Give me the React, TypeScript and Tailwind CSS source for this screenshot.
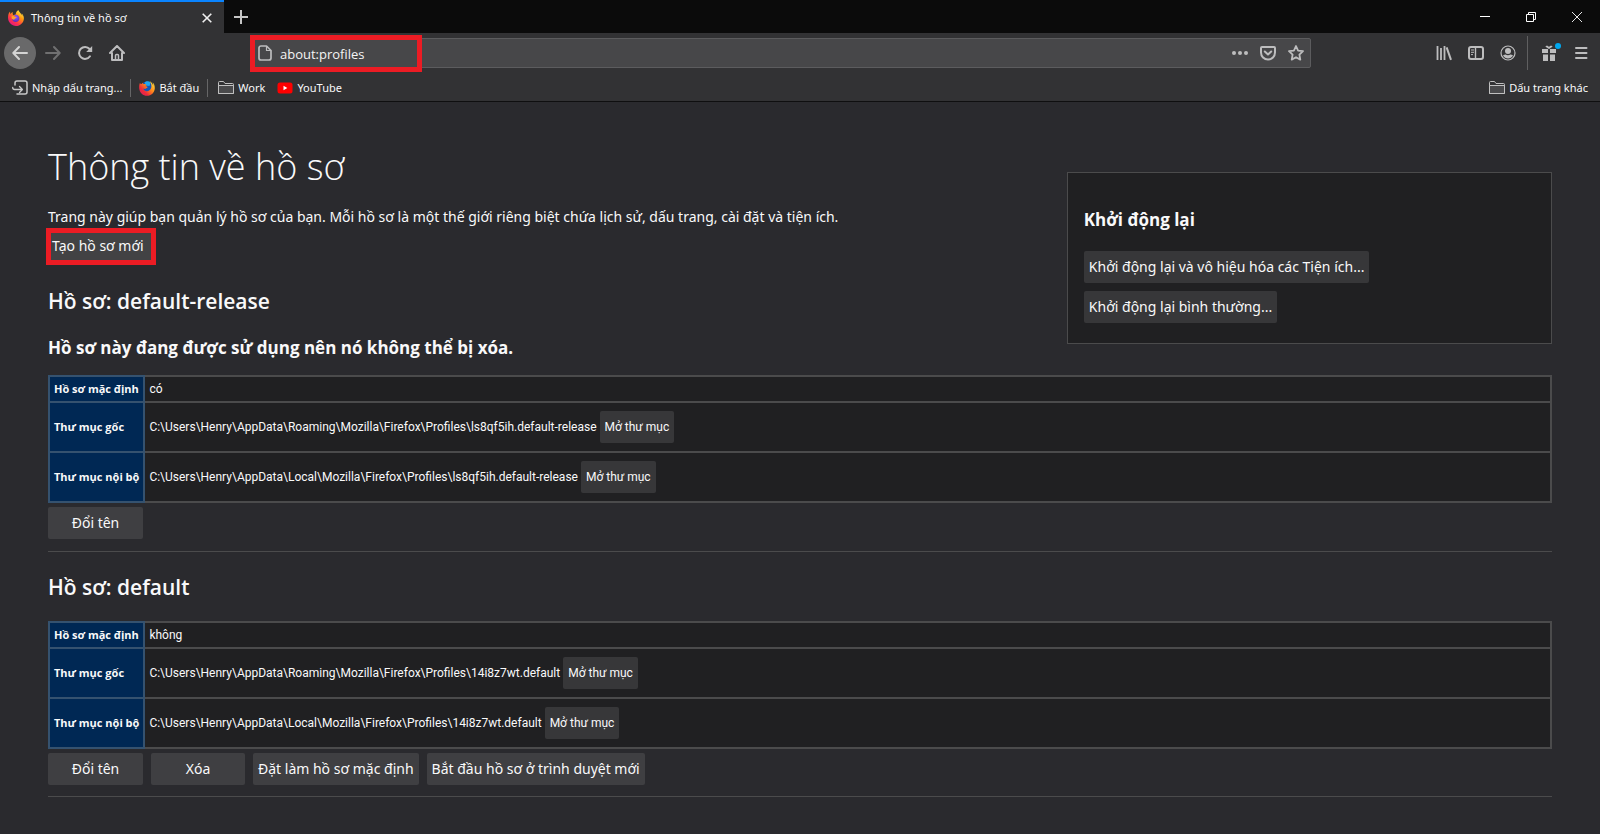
import React from "react";

const pageFont = "font-['Open_Sans','Noto_Sans',sans-serif]";
const smallFont = "font-['Noto_Sans','Open_Sans',sans-serif]";

function FirefoxLogo({ className }: { className?: string }) {
  return (
    <svg viewBox="0 0 16 16" className={className} aria-hidden="true">
      <defs>
        <linearGradient id="fxFlame" x1="0.85" y1="0.05" x2="0.2" y2="0.95">
          <stop offset="0" stopColor="#fff44f" />
          <stop offset="0.35" stopColor="#ff980e" />
          <stop offset="0.7" stopColor="#ff3647" />
          <stop offset="1" stopColor="#e31587" />
        </linearGradient>
        <radialGradient id="fxGlobe" cx="0.5" cy="0.3" r="0.7">
          <stop offset="0" stopColor="#9059ff" />
          <stop offset="1" stopColor="#5b2bb5" />
        </radialGradient>
      </defs>
      <path
        d="M15.2 5.6c-.35-.85-1.05-1.75-1.6-2.05.45.87.7 1.75.8 2.4C13.5 3.7 12 2.8 10.8.9 10.6.6 10.5.4 10.4.1 8.5 1.2 7.8 3.2 7.7 4.4c-.9.05-1.7.3-2.4.75-.1-.1-.3-.4-.35-.6-.4-.7-.3-1.8-.1-2.5C3.8 2.5 3 3.3 2.5 3.9c-.4-.5-.4-2.1-.35-2.45C1.3 2 .2 3.7.1 6.5-.5 12 3.5 16 8 16c4.2 0 7.8-3.2 7.9-7.8 0-.9-.3-1.8-.7-2.6z"
        fill="url(#fxFlame)"
      />
      <path d="M6.5 5.2c2.200-1 4.700.3 4.900 3 .1 2.300-1.600 3.900-3.700 3.900-2.200 0-3.600-1.700-3.500-3.400.5-.8 1.800-.6 2.300-1z" fill="url(#fxGlobe)" />
      <path d="M3.6 6.3c1.300-.7 2.600-.4 3.300.5.600.1 1.400.2 1.700.4 0 .5-.6 1-1.700 1.300.1 1.100-1.200 1.500-2.300.8-.2 0-.8-.4-1-1z" fill="#ffa12b" />
    </svg>
  );
}

function FirefoxOldLogo({ className }: { className?: string }) {
  return (
    <svg viewBox="0 0 16 16" className={className} aria-hidden="true">
      <defs>
        <linearGradient id="fxOld" x1="0.95" y1="0.1" x2="0.1" y2="0.9">
          <stop offset="0" stopColor="#ffe03d" />
          <stop offset="0.4" stopColor="#ff8b1a" />
          <stop offset="0.75" stopColor="#ee2b3a" />
          <stop offset="1" stopColor="#e01f5a" />
        </linearGradient>
      </defs>
      <circle cx="8" cy="7" r="5.5" fill="#1456b8" />
      <path d="M5.5 2.6C7 1 10 .8 11.6 2.4L10.5 6 7 5.4z" fill="#1fa6f0" />
      <path
        d="M.9 3C.3 4.6 0 6.5.2 8.4.7 12.7 4 15.8 8 15.8c4.300 0 7.600-3.300 7.800-7.600.1-2.300-.8-4.600-2.200-5.900.5 1.200.7 2.400.6 3.500-.5-1.900-1.700-3.700-3.600-4.700 1.600 2.500 2.200 4.700 1.600 6.700-.7 2.300-2.600 3.600-4.700 3.400-1.900-.2-3-1.500-3.100-2.700 1 .7 2.300.6 2.900-.2.400-.5 1.100-.6 1.300-1-.2-.7-1.200-.9-2.200-1 .2-.5.900-.9 1.300-1.200-.6-.7-2.100-1.300-3.400-1C4 4.300 4 3.400 4.400 2.500 3.500 2.900 3 3.400 2.500 4.100 1.700 4 1.200 3.600.9 3z"
        fill="url(#fxOld)"
      />
    </svg>
  );
}

function FolderIcon() {
  return (
    <svg viewBox="0 0 16 16" className="size-4 shrink-0" fill="none" stroke="#c0c0c0" aria-hidden="true">
      <path d="M.5 13.5v-11a1 1 0 0 1 1-1h4l1.500 2h7.500a1 1 0 0 1 1 1v9z" />
      <path d="M.5 5.5h15v8H.5z" fill="#4a4a4c" />
    </svg>
  );
}

function ToolButton({ label, children, className = "" }: { label: string; children: React.ReactNode; className?: string }) {
  return (
    <button type="button" aria-label={label} className={`flex size-8 shrink-0 items-center justify-center text-[#bdbdbe] ${className}`}>
      {children}
    </button>
  );
}

function TitleBar() {
  return (
    <div className="flex h-[33px] items-stretch bg-[#0b0b0b]">
      <div className="flex w-56 items-center border-t-2 border-[#0a84ff] bg-[#323234] px-2">
        <FirefoxLogo className="size-4 shrink-0" />
        <span className={`flex-1 pl-[7px] text-[11px] leading-4 whitespace-nowrap ${smallFont}`}>Thông tin về hồ sơ</span>
        <button type="button" aria-label="Đóng thẻ" className="flex h-5 w-[18px] items-center justify-center">
          <svg viewBox="0 0 10 10" className="size-[10px]" stroke="#f0f0f0" strokeWidth="1.6" aria-hidden="true">
            <path d="M.7.7l8.600 8.600M9.300.7L.7 9.300" />
          </svg>
        </button>
      </div>
      <button type="button" aria-label="Mở thẻ mới" className="flex w-[34px] items-center justify-center">
        <svg viewBox="0 0 14 14" className="size-[14px]" stroke="#c6c6c6" strokeWidth="2" aria-hidden="true">
          <path d="M7 0v14M0 7h14" />
        </svg>
      </button>
      <div className="flex-1" />
      <div className="flex">
        <button type="button" aria-label="Thu nhỏ" className="flex w-[46px] items-center justify-center">
          <svg viewBox="0 0 10 10" className="size-[10px]" stroke="#fff" aria-hidden="true">
            <path d="M0 4.500h10" />
          </svg>
        </button>
        <button type="button" aria-label="Khôi phục" className="flex w-[46px] items-center justify-center">
          <svg viewBox="0 0 10 10" className="size-[10px]" stroke="#fff" fill="none" aria-hidden="true">
            <path d="M.5 2.500h7v7h-7zM2.500 2.500v-2h7v7h-2" />
          </svg>
        </button>
        <button type="button" aria-label="Đóng" className="flex w-[46px] items-center justify-center">
          <svg viewBox="0 0 10 10" className="size-[10px]" stroke="#fff" strokeWidth="0.9" aria-hidden="true">
            <path d="M0 0l10 10M10 0L0 10" />
          </svg>
        </button>
      </div>
    </div>
  );
}

function NavBar() {
  return (
    <div className="flex h-10 items-center bg-[#323234] pr-[3px] pl-1">
      <ToolButton label="Quay lại" className="mr-px rounded-full bg-[#69696a]">
        <svg viewBox="0 0 16 16" className="size-4" fill="none" stroke="#d4d4d4" strokeWidth="2" strokeLinecap="round" strokeLinejoin="round" aria-hidden="true">
          <path d="M15 8H1.500M7 2L1.300 8 7 14" />
        </svg>
      </ToolButton>
      <ToolButton label="Tiến tới">
        <svg viewBox="0 0 16 16" className="size-4" fill="none" stroke="#707071" strokeWidth="2" strokeLinecap="round" strokeLinejoin="round" aria-hidden="true">
          <path d="M1 8h13.500M9 2l5.700 6L9 14" />
        </svg>
      </ToolButton>
      <ToolButton label="Tải lại">
        <svg viewBox="0 0 16 16" className="size-4" fill="none" stroke="currentColor" strokeWidth="2" strokeLinecap="round" aria-hidden="true">
          <path d="M13 11.300A6 6 0 1 1 12.600 4" />
          <path d="M15.200 1v6h-6z" fill="currentColor" stroke="none" />
        </svg>
      </ToolButton>
      <ToolButton label="Trang chủ">
        <svg viewBox="0 0 16 16" className="size-4" fill="none" stroke="currentColor" strokeWidth="2" strokeLinecap="round" strokeLinejoin="round" aria-hidden="true">
          <path d="M1 8l7-7 7 7M3 8v7h10V8" />
          <path d="M6.500 15v-4.500a1 1 0 0 1 1-1h1a1 1 0 0 1 1 1V15" strokeWidth="1.500" />
        </svg>
      </ToolButton>
      <div className="flex flex-1 justify-center pr-[117px] pl-[118px]">
        <div className="relative flex h-[30px] w-full items-center rounded-xs border border-[#5c5c5e] bg-[#474749] pl-1.5">
          <svg viewBox="0 0 14 16" className="h-4 w-[14px] shrink-0" fill="none" stroke="#bdbdbe" strokeWidth="1.700" strokeLinejoin="round" aria-hidden="true">
            <path d="M1 3a2 2 0 0 1 2-2h5.500L13 5.500V13a2 2 0 0 1-2 2H3a2 2 0 0 1-2-2z" />
            <path d="M8.500 1v4.500H13" strokeWidth="1.200" />
          </svg>
          <input
            aria-label="Địa chỉ"
            defaultValue="about:profiles"
            className="ml-2 min-w-0 flex-1 bg-transparent pt-0.5 text-[13px] leading-5 text-[#f4f4f4] outline-none"
          />
          <button type="button" aria-label="Thao tác trang" className="flex w-7 justify-center">
            <svg viewBox="0 0 16 16" className="size-4" fill="#bdbdbe" aria-hidden="true">
              <circle cx="2" cy="8" r="2" />
              <circle cx="8" cy="8" r="2" />
              <circle cx="14" cy="8" r="2" />
            </svg>
          </button>
          <button type="button" aria-label="Lưu vào Pocket" className="flex w-7 justify-center">
            <svg viewBox="0 0 16 16" className="size-4" fill="none" stroke="#bdbdbe" strokeWidth="2" strokeLinecap="round" strokeLinejoin="round" aria-hidden="true">
              <path d="M2 2h12a1 1 0 0 1 1 1v4.500a7 7 0 0 1-14 0V3a1 1 0 0 1 1-1z" />
              <path d="M4.800 6.500L8 9.500l3.200-3" />
            </svg>
          </button>
          <button type="button" aria-label="Đánh dấu trang" className="flex w-7 justify-center">
            <svg viewBox="0 0 16 16" className="size-4" fill="none" stroke="#bdbdbe" strokeWidth="1.800" strokeLinejoin="round" aria-hidden="true">
              <path d="M8 1l2.100 4.600 4.900.6-3.600 3.400.9 5L8 12.200l-4.300 2.400.9-5L1 6.200l4.900-.6z" />
            </svg>
          </button>
          <div className="pointer-events-none absolute -top-1 -left-0.5 h-[37px] w-[172px] border-5 border-[#ec1c24]" />
        </div>
      </div>
      <ToolButton label="Thư viện">
        <svg viewBox="0 0 16 16" className="size-4" fill="none" stroke="currentColor" aria-hidden="true">
          <path d="M1.500 1v14M5 3v12M8.500 1v14" strokeWidth="1.800" />
          <path d="M10.600 2.300l4.400 12.500" strokeWidth="2" />
        </svg>
      </ToolButton>
      <ToolButton label="Thanh lề">
        <svg viewBox="0 0 16 16" className="size-4" fill="none" stroke="currentColor" strokeWidth="2" aria-hidden="true">
          <rect x="1" y="2" width="14" height="12" rx="2" />
          <path d="M7.500 2v12" strokeWidth="1.400" />
          <path d="M3 5h3M3 7.300h3M3 9.600h2" strokeWidth="1" />
        </svg>
      </ToolButton>
      <ToolButton label="Tài khoản">
        <svg viewBox="0 0 16 16" className="size-4" aria-hidden="true">
          <circle cx="8" cy="8" r="7" fill="none" stroke="currentColor" strokeWidth="1.200" />
          <circle cx="8" cy="6" r="3" fill="currentColor" />
          <path d="M3 10.500c1-.8 2-1 2.600-1 1.400 1.100 3.400 1.100 4.800 0 .6 0 1.600.2 2.600 1-1 2-3 3-5 3s-4-1-5-3z" fill="currentColor" />
        </svg>
      </ToolButton>
      <div className="mr-[5px] ml-[3px] h-[34px] w-px bg-[#5f5f60]" />
      <ToolButton label="Có gì mới" className="relative">
        <svg viewBox="0 0 16 16" className="size-4" fill="currentColor" aria-hidden="true">
          <path d="M1 4h6v4H1zM9 4h6v4H9zM2 9.500h5V16H2zM9 9.500h5V16H9zM4.500 1.800C4.500.3 7 .2 8 2c1-1.800 3.500-1.700 3.500-.2L8 4z" />
        </svg>
        <span className="absolute top-1.5 right-1 size-1.5 rounded-full bg-[#00a8f0]" />
      </ToolButton>
      <ToolButton label="Mở trình đơn">
        <svg viewBox="0 0 16 16" className="size-4" stroke="currentColor" strokeWidth="2" strokeLinecap="round" aria-hidden="true">
          <path d="M3 3h10.500M3 8h10.500M3 13h10.500" />
        </svg>
      </ToolButton>
    </div>
  );
}

function BookmarksBar() {
  return (
    <div className={`flex h-[29px] items-center border-b border-[#0f0f10] bg-[#323234] px-3 pt-0.5 text-[11px] leading-4 whitespace-nowrap ${smallFont}`}>
      <a href="#import" className="flex items-center gap-1">
        <svg viewBox="0 0 16 16" className="size-4 shrink-0" fill="none" stroke="#c8c8c8" strokeWidth="1.500" strokeLinecap="round" strokeLinejoin="round" aria-hidden="true">
          <path d="M3 5V3a2 2 0 0 1 2-2h8a2 2 0 0 1 2 2v9a2 2 0 0 1-2 2H5" />
          <path d="M.7 7.500a2 2 0 0 0 2 2H10M7.500 6.500l2.900 3-2.900 3" strokeWidth="1.300" />
        </svg>
        Nhập dấu trang...
      </a>
      <div className="mx-2 h-[18px] w-px bg-[#666667]" />
      <a href="#start" className="flex items-center gap-1">
        <FirefoxOldLogo className="size-4 shrink-0" />
        Bắt đầu
      </a>
      <div className="mr-2.5 ml-2 h-[18px] w-px bg-[#666667]" />
      <a href="#work" className="flex items-center gap-1">
        <FolderIcon />
        Work
      </a>
      <a href="#youtube" className="ml-3 flex items-center gap-1">
        <svg viewBox="0 0 16 16" className="size-4 shrink-0" aria-hidden="true">
          <rect x="0.5" y="2.5" width="15" height="11" rx="2.5" fill="#f00" />
          <path d="M6.500 5.800v4.400L10.300 8z" fill="#fff" />
        </svg>
        YouTube
      </a>
      <div className="flex-1" />
      <a href="#other" className="flex items-center gap-1">
        <FolderIcon />
        Dấu trang khác
      </a>
    </div>
  );
}

function PageButton({ children, className = "" }: { children: React.ReactNode; className?: string }) {
  return (
    <button type="button" className={`h-8 rounded-xs text-center whitespace-nowrap ${className}`}>
      {children}
    </button>
  );
}

type Profile = { isDefault: string; root: string; local: string };

function ProfileTable({ profile }: { profile: Profile }) {
  const th = "border-2 border-[#35526f] bg-[#002854] px-1 text-left text-[11px] font-['Open_Sans'] font-bold";
  const td = "border-2 border-[#4b4b4c] bg-[#202022] px-1 text-left text-[12px] font-['Roboto']";
  return (
    <table className="w-full border-collapse leading-4 whitespace-nowrap">
      <tbody>
        <tr className="h-[26px]">
          <th scope="row" className={th}>Hồ sơ mặc định</th>
          <td className={`${td} w-full`}>{profile.isDefault}</td>
        </tr>
        {[
          ["Thư mục gốc", profile.root],
          ["Thư mục nội bộ", profile.local],
        ].map(([name, path]) => (
          <tr key={name} className="h-[50px]">
            <th scope="row" className={th}>{name}</th>
            <td className={td}>
              <div className="flex items-center gap-[3px]">
                <span>{path}</span>
                <PageButton className="bg-[#373739] px-[5px]">Mở thư mục</PageButton>
              </div>
            </td>
          </tr>
        ))}
      </tbody>
    </table>
  );
}

export default function App() {
  return (
    <div className={`flex min-h-screen flex-col bg-[#2a2a2e] text-[#f9f9fa] ${pageFont}`}>
      <header>
        <TitleBar />
        <NavBar />
        <BookmarksBar />
      </header>
      <main className={`px-12 pt-[39px] text-[14px] leading-5 ${smallFont}`}>
        <div className="flex items-start justify-between">
          <div>
            <h1 className={`text-[36px] leading-[52px] font-light ${pageFont}`}>Thông tin về hồ sơ</h1>
            <p className="mt-3 leading-6">
              Trang này giúp bạn quản lý hồ sơ của bạn. Mỗi hồ sơ là một thế giới riêng biệt chứa lịch sử, dấu trang, cài đặt và tiện ích.
            </p>
            <div className="relative mt-px inline-block">
              <PageButton className="bg-[#424244] pr-2.5 pl-1">Tạo hồ sơ mới</PageButton>
              <div className="pointer-events-none absolute -inset-x-0.5 -top-0.5 h-[37px] border-5 border-[#ec1c24]" />
            </div>
            <h2 className={`mt-[23px] text-[21px] leading-8 font-semibold ${pageFont}`}>Hồ sơ: default-release</h2>
            <h3 className={`mt-[17px] mb-[13px] text-[17px] leading-7 font-bold ${pageFont}`}>Hồ sơ này đang được sử dụng nên nó không thể bị xóa.</h3>
          </div>
          <aside className="mt-[31px] box-content flex w-[30%] flex-col items-start border border-[#4b4b4c] bg-[#202022] px-4 pt-[33px] pb-5">
            <h3 className={`text-[17px] leading-7 font-bold ${pageFont}`}>Khởi động lại</h3>
            <PageButton className="mt-[17px] bg-[#373739] px-[5px]">Khởi động lại và vô hiệu hóa các Tiện ích...</PageButton>
            <PageButton className="mt-2 bg-[#373739] px-[5px]">Khởi động lại bình thường...</PageButton>
          </aside>
        </div>

        <section>
          <ProfileTable
            profile={{
              isDefault: "có",
              root: "C:\\Users\\Henry\\AppData\\Roaming\\Mozilla\\Firefox\\Profiles\\ls8qf5ih.default-release",
              local: "C:\\Users\\Henry\\AppData\\Local\\Mozilla\\Firefox\\Profiles\\ls8qf5ih.default-release",
            }}
          />
          <div className="mt-1 flex gap-2">
            <PageButton className="min-w-[95px] bg-[#3f3f42]">Đổi tên</PageButton>
          </div>
          <hr className="mt-3 border-[#4b4b4c]" />
        </section>

        <section>
          <h2 className={`mt-[19px] mb-[18px] text-[21px] leading-8 font-semibold ${pageFont}`}>Hồ sơ: default</h2>
          <ProfileTable
            profile={{
              isDefault: "không",
              root: "C:\\Users\\Henry\\AppData\\Roaming\\Mozilla\\Firefox\\Profiles\\14i8z7wt.default",
              local: "C:\\Users\\Henry\\AppData\\Local\\Mozilla\\Firefox\\Profiles\\14i8z7wt.default",
            }}
          />
          <div className="mt-1 flex gap-2">
            <PageButton className="min-w-[95px] bg-[#3f3f42]">Đổi tên</PageButton>
            <PageButton className="min-w-[94px] bg-[#3f3f42]">Xóa</PageButton>
            <PageButton className="bg-[#3f3f42] px-[5px]">Đặt làm hồ sơ mặc định</PageButton>
            <PageButton className="bg-[#3f3f42] px-[5px]">Bắt đầu hồ sơ ở trình duyệt mới</PageButton>
          </div>
          <hr className="mt-[11px] border-[#4b4b4c]" />
        </section>
      </main>
    </div>
  );
}
